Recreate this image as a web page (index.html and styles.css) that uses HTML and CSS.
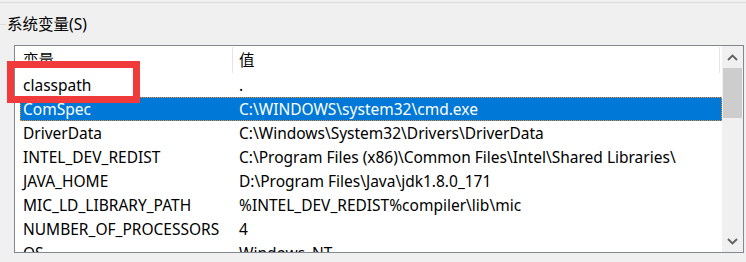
FILE: index.html
```html
<!DOCTYPE html>
<html lang="zh-CN">
<head>
  <meta charset="UTF-8">
  <title>系统变量</title>
  <link rel="stylesheet" href="styles.css">
</head>
<body>
  <div class="topline"></div>
  <div class="group-title">
    <span class="rule"></span>
    <span class="label">系统变量(S)</span>
  </div>

  <div class="listview">
    <div class="list">
      <div class="header">
        <div class="col name">变量</div>
        <div class="col value">值</div>
      </div>
      <div class="row"><div class="cell name">classpath</div><div class="cell value">.</div></div>
      <div class="row selected"><div class="cell name">ComSpec</div><div class="cell value">C:\WINDOWS\system32\cmd.exe</div></div>
      <div class="row"><div class="cell name">DriverData</div><div class="cell value">C:\Windows\System32\Drivers\DriverData</div></div>
      <div class="row"><div class="cell name">INTEL_DEV_REDIST</div><div class="cell value">C:\Program Files (x86)\Common Files\Intel\Shared Libraries\</div></div>
      <div class="row"><div class="cell name">JAVA_HOME</div><div class="cell value">D:\Program Files\Java\jdk1.8.0_171</div></div>
      <div class="row"><div class="cell name">MIC_LD_LIBRARY_PATH</div><div class="cell value">%INTEL_DEV_REDIST%compiler\lib\mic</div></div>
      <div class="row"><div class="cell name">NUMBER_OF_PROCESSORS</div><div class="cell value">4</div></div>
      <div class="row"><div class="cell name">OS</div><div class="cell value">Windows_NT</div></div>
    </div>
    <div class="scrollbar">
      <div class="arrow">
        <svg width="11" height="7" viewBox="0 0 11 7"><path d="M1 6 L5.5 1.5 L10 6" fill="none" stroke="#606060" stroke-width="1.8"/></svg>
      </div>
      <div class="thumb"></div>
      <div class="track"></div>
      <div class="arrow">
        <svg width="11" height="7" viewBox="0 0 11 7"><path d="M1 1 L5.5 5.5 L10 1" fill="none" stroke="#606060" stroke-width="1.8"/></svg>
      </div>
    </div>
  </div>

  <!-- annotation box around classpath -->
  <div class="mark"></div>
</body>
</html>
```

FILE: styles.css
```css
body {
  margin: 0;
  background: #f0f0f0;
  font-family: "Noto Sans", "Noto Sans CJK SC", sans-serif;
  font-size: 15.5px;
  color: #000;
  position: relative;
  height: 262px;
  overflow: hidden;
}

.topline {
  height: 1px;
  margin-top: 2px;
  background: #dcdcdc;
}

.group-title {
  display: flex;
  align-items: center;
  height: 20px;
  margin-top: 11px;
}

.rule {
  width: 6px;
  height: 1px;
  background: #dcdcdc;
}

.label {
  margin-left: 1px;
  line-height: 20px;
}

.listview {
  display: flex;
  box-sizing: border-box;
  width: 730px;
  height: 208px;
  margin: 11px 0 0 14px;
  border: 1px solid #828790;
  background: #fff;
}

.list {
  flex: 1;
  overflow: hidden;
}

.header {
  display: flex;
  height: 27px;
}

.col {
  box-sizing: border-box;
  height: 26px;
  margin-top: 1px;
  line-height: 26px;
  border-right: 1px solid #e5e5e5;
}

.col.name {
  width: 218px;
  padding-left: 8px;
}

.col.value {
  width: 487px;
  padding-left: 6px;
}

.row {
  display: flex;
  box-sizing: border-box;
  height: 24px;
  line-height: 24px;
  margin-left: 5px;
  white-space: nowrap;
}

.cell.name {
  width: 213px;
  padding-left: 3px;
  box-sizing: border-box;
}

.cell.value {
  padding-left: 6px;
}

.row.selected {
  background: #0078d7;
  color: #fff;
  outline: 1px dotted #f08c28;
  outline-offset: -1px;
}

.scrollbar {
  display: flex;
  flex-direction: column;
  width: 21px;
  background: #f0f0f0;
}

.arrow {
  height: 22px;
  display: flex;
  align-items: center;
  justify-content: center;
}

.thumb {
  height: 50px;
  margin: 0 1px;
  background: #cdcdcd;
}

.track {
  flex: 1;
}

.mark {
  position: absolute;
  left: 7px;
  top: 61px;
  width: 133px;
  height: 42px;
  box-sizing: border-box;
  border: 7px solid #f03a3c;
}
```
